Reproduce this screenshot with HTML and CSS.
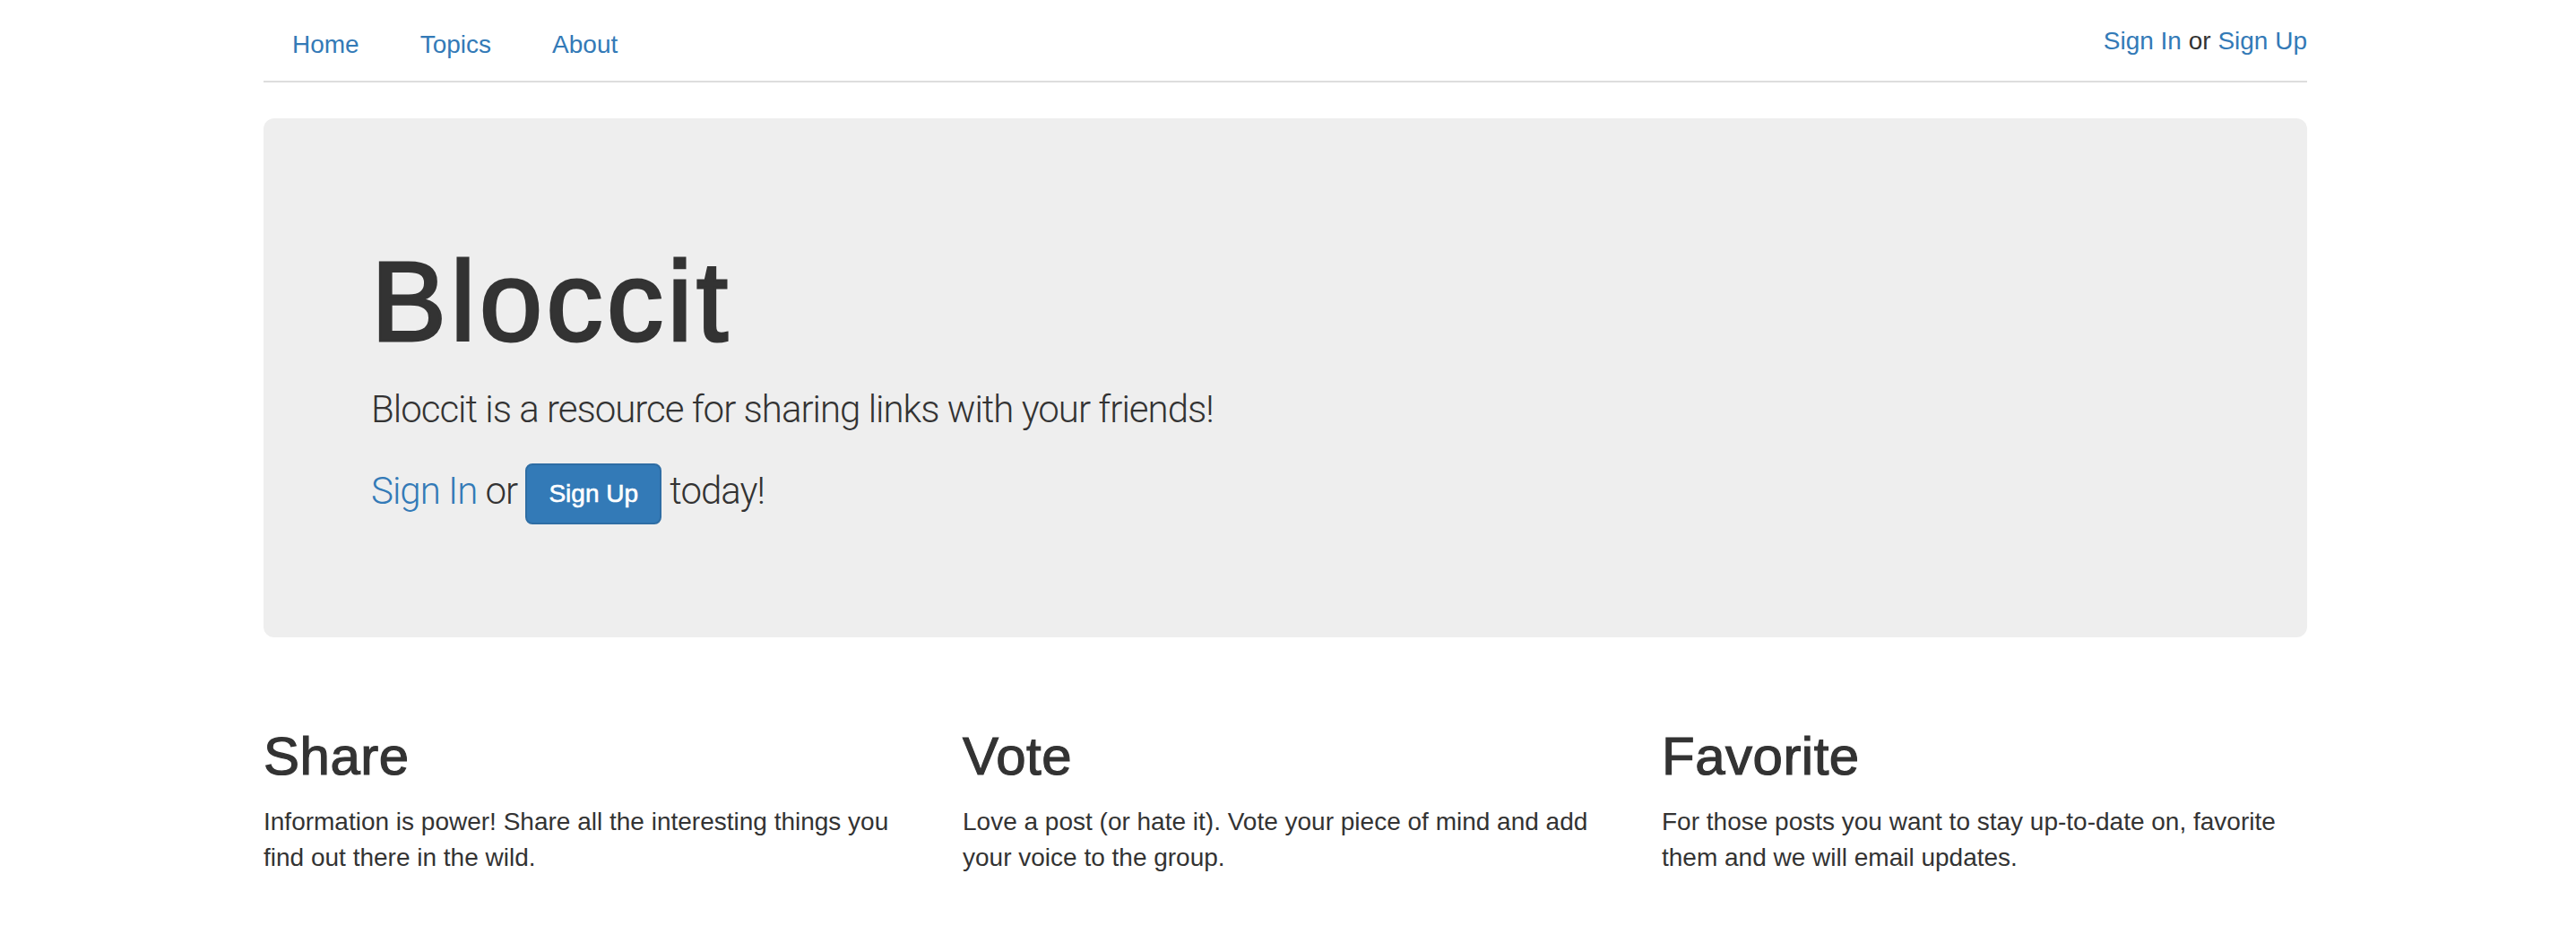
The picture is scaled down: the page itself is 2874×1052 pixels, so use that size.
FILE: index.html
```html
<!DOCTYPE html>
<html lang="en">
<head>
<meta charset="utf-8">
<title>Bloccit</title>
<link rel="stylesheet" href="styles.css">
</head>
<body>
<div class="container">
  <div class="nav-bar">
    <ul class="nav-tabs">
      <li><a href="#">Home</a></li>
      <li><a href="#">Topics</a></li>
      <li><a href="#">About</a></li>
    </ul>
    <div class="user-info"><a href="#">Sign In</a> or <a href="#">Sign Up</a></div>
  </div>

  <div class="jumbotron">
    <h1>Bloccit</h1>
    <p>Bloccit is a resource for sharing links with your friends!</p>
    <p><a href="#">Sign In</a> or <a class="btn" href="#">Sign Up</a> today!</p>
  </div>

  <div class="row">
    <div class="col">
      <h2>Share</h2>
      <p>Information is power! Share all the interesting things you find out there in the wild.</p>
    </div>
    <div class="col">
      <h2>Vote</h2>
      <p>Love a post (or hate it). Vote your piece of mind and add your voice to the group.</p>
    </div>
    <div class="col">
      <h2>Favorite</h2>
      <p>For those posts you want to stay up-to-date on, favorite them and we will email updates.</p>
    </div>
  </div>
</div>
</body>
</html>
```

FILE: styles.css
```css
* { box-sizing: border-box; }
html, body { margin: 0; background: #fff; }
body {
  padding: 0 6px 0 0;
  font-family: "Liberation Sans", Arial, Helvetica, sans-serif;
  font-size: 28px;
  line-height: 40px;
  color: #333;
}
a { color: #337ab7; text-decoration: none; }

.container {
  width: 2340px;
  margin: 0 auto;
  padding: 0 30px;
}

.nav-bar {
  margin-top: 10px;
  display: flex;
  justify-content: space-between;
  align-items: flex-start;
  border-bottom: 2px solid #ddd;
}
.nav-tabs {
  list-style: none;
  margin: 0;
  padding: 0;
  display: flex;
}
.nav-tabs li { margin-right: 4px; }
.nav-tabs a {
  display: block;
  padding: 20px 32px;
  line-height: 40px;
}
.user-info {
  padding-top: 16px;
  line-height: 40px;
}

.jumbotron {
  margin-top: 40px;
  margin-bottom: 60px;
  padding: 96px 120px;
  background: #eee;
  border-radius: 12px;
}
.jumbotron h1 {
  margin: 40px 0 20px;
  font-family: "Liberation Sans", Arial, sans-serif;
  font-weight: 400;
  font-size: 126px;
  line-height: 1.1;
  letter-spacing: 4.5px;
  -webkit-text-stroke: 3px #333;
  color: #333;
}
.jumbotron p {
  margin: 0 0 30px;
  font-family: Roboto, "Liberation Sans", sans-serif;
  font-weight: 300;
  font-size: 42px;
  line-height: 60px;
  letter-spacing: -1px;
}
.btn {
  display: inline-block;
  vertical-align: middle;
  padding: 12px 24px;
  font-family: "Liberation Sans", Arial, sans-serif;
  font-size: 28px;
  font-weight: 400;
  line-height: 40px;
  letter-spacing: 0;
  color: #fff;
  background: #337ab7;
  border: 2px solid #2e6da4;
  border-radius: 8px;
  -webkit-text-stroke: 0.6px #fff;
}

.row {
  display: grid;
  grid-template-columns: repeat(3, 1fr);
  margin: 0 -30px;
}
.col { padding: 0 30px; }
.col h2 {
  margin: 40px 0 20px;
  font-family: "Liberation Sans", Arial, sans-serif;
  font-weight: 400;
  font-size: 60px;
  line-height: 1.1;
  letter-spacing: 0.5px;
  -webkit-text-stroke: 1.2px #333;
  color: #333;
}
.col p { margin: 0 0 20px; }
```
